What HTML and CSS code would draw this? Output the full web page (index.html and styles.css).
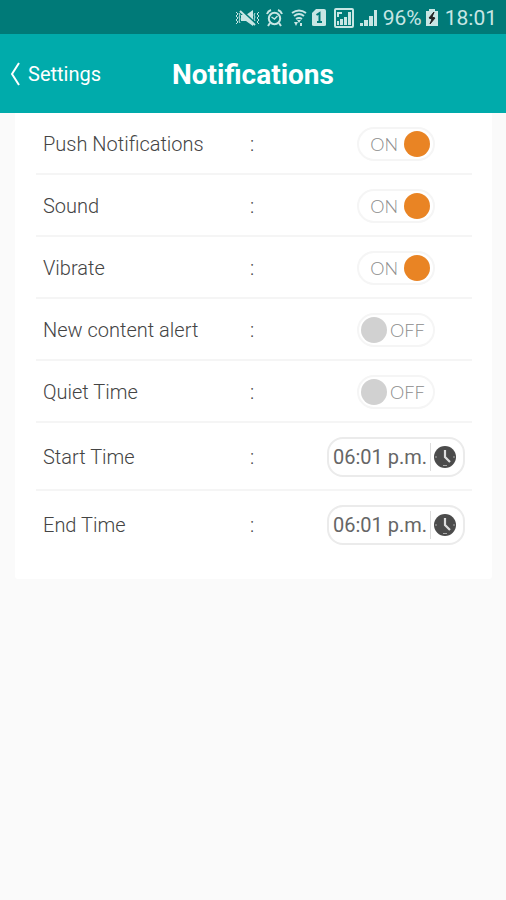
FILE: index.html
```html
<!DOCTYPE html>
<html lang="en">
<head>
<meta charset="utf-8">
<meta name="viewport" content="width=device-width, initial-scale=1">
<title>Notifications</title>
<link rel="stylesheet" href="styles.css">
</head>
<body>
<div class="status">
  <svg class="icon" width="25" height="20" viewBox="0 0 25 20" aria-hidden="true">
    <path d="M6 7h5l7-5v16l-7-5H6z" fill="currentColor"/>
    <path d="M5 1l15 14" stroke="#007a78" stroke-width="2"/>
    <path d="M5 3l15 14" stroke="currentColor" stroke-width="2"/>
    <path d="M1 4l2 2-2 2 2 2-2 2 2 2-2 2M4 5l1 2-1 2 1 2-1 2 1 2M24 4l-2 2 2 2-2 2 2 2-2 2 2 2M20 5l-1 2 1 2-1 2 1 2" fill="none" stroke="currentColor"/>
  </svg>
  <svg class="icon alarm" width="17" height="20" viewBox="0 0 17 20" aria-hidden="true">
    <g fill="none" stroke="currentColor" stroke-width="2">
      <circle cx="8.500" cy="10.500" r="5.700"/>
      <path d="M1 6q1-3 4-4M16 6q-1-3-4-4M4 15l-2 3M13 15l2 3"/>
      <path d="M5.500 9l3 2 3-3" stroke-width="1.400"/>
    </g>
  </svg>
  <svg class="icon wifi" width="16" height="20" viewBox="0 0 16 20" aria-hidden="true">
    <g fill="none" stroke="currentColor" stroke-width="2">
      <path d="M1 5q7-5 14 0M3 8q5-4 10 0M5 11q3-2 6 0"/>
    </g>
    <path d="M6 12h4l-2 3zM3 14h4l-2 4zM9 15h2v3H9z" fill="currentColor"/>
  </svg>
  <svg class="icon sim" width="14" height="20" viewBox="0 0 14 20" aria-hidden="true">
    <path d="M4 1h8q2 0 2 2v14q0 1-2 1H2q-2 0-2-1V5z" fill="currentColor"/>
    <path d="M4.500 7L7.500 5v9M5 14h5" fill="none" stroke="#007a78" stroke-width="2"/>
  </svg>
  <svg class="icon box" width="20" height="20" viewBox="0 0 20 20" aria-hidden="true">
    <rect x="1" y="1" width="18" height="18" rx="1" fill="none" stroke="currentColor" stroke-width="2"/>
    <path d="M3 13h2v4H3zM6 11h3v6H6zM10 9h3v8h-3zM14 4h3v13h-3zM3 4h5v2H5v3H3z" fill="currentColor"/>
  </svg>
  <svg class="icon" width="17" height="20" viewBox="0 0 17 20" aria-hidden="true">
    <path d="M0 15h3v3H0zM4 12h4v6H4zM9 8h4v10H9zM14 2h3v16h-3z" fill="currentColor"/>
  </svg>
  <span class="percent">96%</span>
  <svg class="icon battery" width="12" height="20" viewBox="0 0 12 20" aria-hidden="true">
    <path d="M3 1h6v2h3v15H0V3h3z" fill="currentColor"/>
    <path d="M8 4L3 10l3 1-2 5 5-6-3-1z" fill="#222" stroke="#222"/>
  </svg>
  <time class="clock">18:01</time>
</div>

<header class="bar">
  <a class="back" href="#settings">
    <svg width="10" height="24" viewBox="0 0 10 24" aria-hidden="true"><path d="M9 1L2 12l7 11" fill="none" stroke="currentColor" stroke-width="2"/></svg>
    Settings
  </a>
  <h1 class="title">Notifications</h1>
</header>

<main class="card">
  <div class="row">
    <label for="push">Push Notifications</label><span>:</span>
    <label class="switch"><input type="checkbox" id="push" checked><span class="on">ON</span><span class="off">OFF</span></label>
  </div>
  <div class="row">
    <label for="sound">Sound</label><span>:</span>
    <label class="switch"><input type="checkbox" id="sound" checked><span class="on">ON</span><span class="off">OFF</span></label>
  </div>
  <div class="row">
    <label for="vibrate">Vibrate</label><span>:</span>
    <label class="switch"><input type="checkbox" id="vibrate" checked><span class="on">ON</span><span class="off">OFF</span></label>
  </div>
  <div class="row">
    <label for="content">New content alert</label><span>:</span>
    <label class="switch"><input type="checkbox" id="content"><span class="on">ON</span><span class="off">OFF</span></label>
  </div>
  <div class="row">
    <label for="quiet">Quiet Time</label><span>:</span>
    <label class="switch"><input type="checkbox" id="quiet"><span class="on">ON</span><span class="off">OFF</span></label>
  </div>
  <div class="row tall">
    <label for="start">Start Time</label><span>:</span>
    <div class="time">
      <input type="text" id="start" value="06:01 p.m.">
      <button type="button" aria-label="Pick start time">
        <svg width="22" height="22" viewBox="0 0 22 22" aria-hidden="true"><circle cx="11" cy="11" r="11" fill="#4b4b4b"/><path d="M11 4v7l5 5" fill="none" stroke="#ddd" stroke-width="2.200"/><path d="M1 11h2M19 11h2M9 19.500h4" stroke="#aaa"/></svg>
      </button>
    </div>
  </div>
  <div class="row tall">
    <label for="end">End Time</label><span>:</span>
    <div class="time">
      <input type="text" id="end" value="06:01 p.m.">
      <button type="button" aria-label="Pick end time">
        <svg width="22" height="22" viewBox="0 0 22 22" aria-hidden="true"><circle cx="11" cy="11" r="11" fill="#4b4b4b"/><path d="M11 4v7l5 5" fill="none" stroke="#ddd" stroke-width="2.200"/><path d="M1 11h2M19 11h2M9 19.500h4" stroke="#aaa"/></svg>
      </button>
    </div>
  </div>
</main>
</body>
</html>
```
FILE: styles.css
```css
* {
  box-sizing: border-box;
}

body {
  margin: 0;
  background: #fafafa;
  color: #5c5c5c;
  font-family: Roboto, "Liberation Sans", sans-serif;
  font-size: 20px;
}

.status {
  display: flex;
  align-items: center;
  justify-content: flex-end;
  height: 34px;
  padding: 2px 9px 0 0;
  background: #007a78;
  color: #c8e6e4;
  font-size: 21px;
}

.icon {
  flex: none;
}

.alarm {
  margin: 0 8px 0 6px;
}

.sim {
  margin: 0 8px 0 5px;
}

.box {
  margin-right: 6px;
}

.percent {
  margin-left: 6px;
}

.battery {
  margin: 0 7px 0 4px;
}

.bar {
  display: grid;
  grid-template-columns: 1fr auto 1fr;
  align-items: baseline;
  padding: 22px 10px 21px;
  background: #00abab;
  color: #fff;
}

.back {
  display: flex;
  align-items: center;
  align-self: center;
  gap: 8px;
  color: inherit;
  line-height: 24px;
  text-decoration: none;
}

.title {
  margin: 0;
  padding-top: 2px;
  font-size: 28px;
  font-weight: 700;
  line-height: 34px;
}

.card {
  margin: 0 14px 0 15px;
  padding: 0 20px 20px 21px;
  background: #fff;
  border-radius: 0 0 3px 3px;
}

.row {
  display: grid;
  grid-template-columns: 207px 1fr 152px;
  align-items: center;
  height: 62px;
  padding: 2px 0 0 7px;
  border-bottom: 2px solid #f5f5f5;
  font-weight: 300;
  color: #444;
}

.tall {
  height: 68px;
}

.row:last-child {
  border-bottom-color: transparent;
}

.switch {
  display: flex;
  align-items: center;
  justify-self: center;
  gap: 3px;
  width: 78px;
  height: 34px;
  padding: 0 3px 0 2px;
  border: 2px solid #f5f5f5;
  border-radius: 17px;
  color: #8c8c8c;
  font-family: Lato, sans-serif;
  font-size: 18px;
  font-weight: 300;
}

.switch input {
  appearance: none;
  flex: none;
  width: 26px;
  height: 26px;
  margin: 0;
  border-radius: 50%;
  background: #d1d1d1;
}

.switch input:checked {
  order: 2;
  background: #e98424;
}

.switch .on,
.switch input:checked ~ .off {
  display: none;
}

.switch input:checked ~ .on {
  display: block;
  margin-left: auto;
  margin-right: 3px;
}

.time {
  display: flex;
  align-items: center;
  justify-self: center;
  width: 138px;
  height: 40px;
  border: 2px solid #ebebeb;
  border-radius: 16px;
}

.time input {
  width: 102px;
  height: 28px;
  padding: 0 0 0 4px;
  border: 0;
  border-right: 1px solid #ddd;
  background: none;
  color: #666;
  font: inherit;
  font-weight: 400;
}

.time button {
  display: flex;
  margin-left: 3px;
  padding: 0;
  border: 0;
  background: none;
}
```
